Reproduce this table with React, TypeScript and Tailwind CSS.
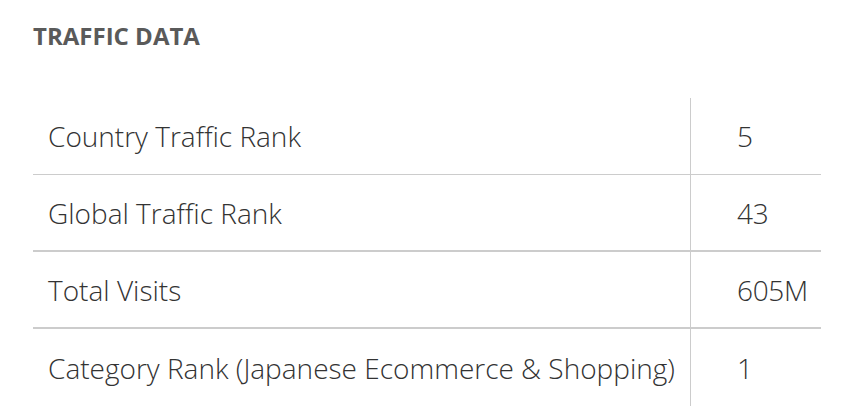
const rows = [
    { label: "Country Traffic Rank", value: "5", border: "border-b border-[#cccccc]" },
    { label: "Global Traffic Rank", value: "43", border: "border-b-2 border-[#cccccc]" },
    { label: "Total Visits", value: "605M", border: "border-b-2 border-[#cccccc]" },
    { label: "Category Rank (Japanese Ecommerce & Shopping)", value: "1", border: "" },
];

export default function App() {
    return (
        <div className="h-[418px] w-[850px] bg-white font-['Open_Sans',sans-serif] text-[#333333]">
            <div className="px-[33px] pt-[21px]">
                <h2 className="text-[24px] font-bold leading-[30px] text-[#5a5a5a]">
                    TRAFFIC DATA
                </h2>

                <div className="mt-[47px] w-[788px]">
                    {rows.map((row) => (
                        <div key={row.label} className={`flex h-[77px] ${row.border}`}>
                            <div className="flex flex-1 items-center pl-[15px] text-[28px] font-light">
                                {row.label}
                            </div>
                            <div className="flex w-[131px] items-center border-l border-[#cccccc] pl-[46px] text-[28px] font-light tracking-[-0.3px]">
                                {row.value}
                            </div>
                        </div>
                    ))}
                </div>
            </div>
        </div>
    );
}
